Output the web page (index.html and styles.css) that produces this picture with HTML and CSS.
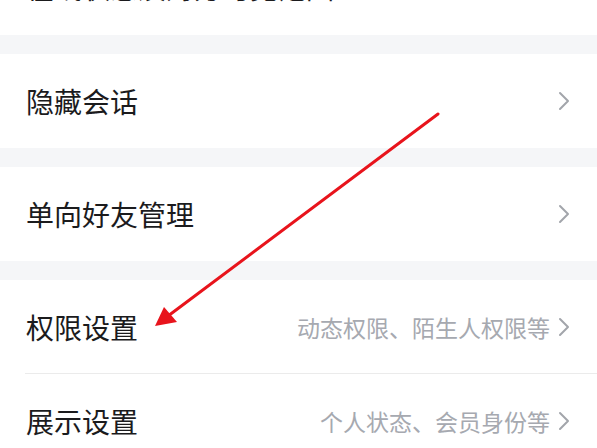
FILE: index.html
```html
<!DOCTYPE html>
<html lang="zh">
<head>
<meta charset="utf-8">
<link rel="stylesheet" href="styles.css">
</head>
<body>
<div class="page">
  <div class="group top">
    <div class="row"><span class="label">在线状态及对方可见范围</span></div>
  </div>
  <div class="group">
    <div class="row"><span class="label">隐藏会话</span><span class="right"><svg class="chev" viewBox="0 0 12 20"><polyline points="2,2 10,10 2,18"/></svg></span></div>
  </div>
  <div class="group">
    <div class="row"><span class="label">单向好友管理</span><span class="right"><svg class="chev" viewBox="0 0 12 20"><polyline points="2,2 10,10 2,18"/></svg></span></div>
  </div>
  <div class="group">
    <div class="row divided"><span class="label">权限设置</span><span class="right"><span class="sub">动态权限、陌生人权限等</span><svg class="chev" viewBox="0 0 12 20"><polyline points="2,2 10,10 2,18"/></svg></span></div>
    <div class="row"><span class="label">展示设置</span><span class="right"><span class="sub">个人状态、会员身份等</span><svg class="chev" viewBox="0 0 12 20"><polyline points="2,2 10,10 2,18"/></svg></span></div>
  </div>
  <svg class="arrow" viewBox="0 0 597 448">
    <line x1="438" y1="114" x2="168" y2="316" />
    <polygon points="155,326 164,307 177,322" />
  </svg>
</div>
</body>
</html>
```
FILE: styles.css
```css
html, body {
  margin: 0;
  padding: 0;
  background: #f5f6f8;
}
body {
  width: 597px;
  height: 448px;
  overflow: hidden;
  font-family: "Noto Sans CJK SC", "Noto Sans", sans-serif;
}
.page {
  position: relative;
  width: 597px;
  height: 448px;
  overflow: hidden;
}
.group {
  background: #ffffff;
  margin-bottom: 19px;
}
.group.top {
  margin-top: -57px;
  margin-bottom: 19px;
}
.group.top .row {
  height: 92px;
  padding-bottom: 4px;
}
.row {
  height: 94px;
  display: flex;
  align-items: center;
  justify-content: space-between;
  padding: 0 27px 0 26px;
  box-sizing: border-box;
  position: relative;
}
.row.divided::after {
  content: "";
  position: absolute;
  left: 25px;
  right: 0;
  bottom: 0;
  height: 1px;
  background: #ebebeb;
}
.label {
  font-size: 28px;
  color: #1b1b1d;
}
.right {
  display: flex;
  align-items: center;
  gap: 8px;
}
.sub {
  font-size: 23px;
  color: #a6a9b0;
}
.chev {
  width: 12px;
  height: 20px;
  fill: none;
  stroke: #a2a5ab;
  stroke-width: 2;
  stroke-linecap: round;
  stroke-linejoin: round;
}
.arrow {
  position: absolute;
  left: 0;
  top: 0;
  width: 597px;
  height: 448px;
  pointer-events: none;
}
.arrow line {
  stroke: #e8141c;
  stroke-width: 3;
  stroke-linecap: round;
}
.arrow polygon {
  fill: #e8141c;
}
```
